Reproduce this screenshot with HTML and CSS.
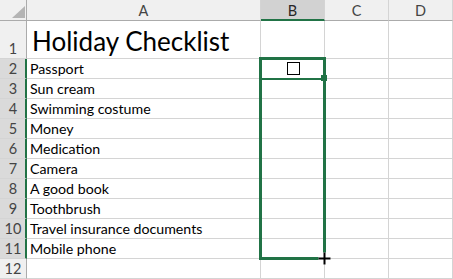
FILE: index.html
```html
<!DOCTYPE html>
<html>
<head>
<meta charset="utf-8">
<link rel="stylesheet" href="styles.css">
</head>
<body>
<div class="wrap">
  <div class="sheet">
    <div class="corner"><span class="tri"></span></div>
    <div class="ch">A</div>
    <div class="ch ch-sel">B</div>
    <div class="ch">C</div>
    <div class="ch">D</div>

    <div class="rh">1</div>
    <div class="cell title">Holiday Checklist</div>
    <div class="cell"></div><div class="cell"></div><div class="cell"></div>

    <div class="rh rh-sel">2</div>
    <div class="cell">Passport</div>
    <div class="cell center"><span class="box"></span></div><div class="cell"></div><div class="cell"></div>

    <div class="rh rh-sel">3</div>
    <div class="cell">Sun cream</div>
    <div class="cell"></div><div class="cell"></div><div class="cell"></div>

    <div class="rh rh-sel">4</div>
    <div class="cell">Swimming costume</div>
    <div class="cell"></div><div class="cell"></div><div class="cell"></div>

    <div class="rh rh-sel">5</div>
    <div class="cell">Money</div>
    <div class="cell"></div><div class="cell"></div><div class="cell"></div>

    <div class="rh rh-sel">6</div>
    <div class="cell">Medication</div>
    <div class="cell"></div><div class="cell"></div><div class="cell"></div>

    <div class="rh rh-sel">7</div>
    <div class="cell">Camera</div>
    <div class="cell"></div><div class="cell"></div><div class="cell"></div>

    <div class="rh rh-sel">8</div>
    <div class="cell">A good book</div>
    <div class="cell"></div><div class="cell"></div><div class="cell"></div>

    <div class="rh rh-sel">9</div>
    <div class="cell">Toothbrush</div>
    <div class="cell"></div><div class="cell"></div><div class="cell"></div>

    <div class="rh rh-sel">10</div>
    <div class="cell">Travel insurance documents</div>
    <div class="cell"></div><div class="cell"></div><div class="cell"></div>

    <div class="rh rh-sel">11</div>
    <div class="cell">Mobile phone</div>
    <div class="cell"></div><div class="cell"></div><div class="cell"></div>

    <div class="rh">12</div>
    <div class="cell"></div>
    <div class="cell"></div><div class="cell"></div><div class="cell"></div>
  </div>

  <div class="sel">
    <div class="active-line"></div>
  </div>
  <div class="handle"></div>
  <svg class="cursor" width="15" height="15" viewBox="0 0 15 15">
    <path d="M7.5 1.5 V13.5 M1.5 7.5 H13.5" stroke="#fff" stroke-width="5" fill="none"/>
    <path d="M7.5 1.5 V13.5 M1.5 7.5 H13.5" stroke="#000" stroke-width="2" fill="none"/>
  </svg>
</div>
</body>
</html>
```
FILE: styles.css
```css
html, body {
  margin: 0;
  padding: 0;
  background: #fff;
}
body {
  font-family: Lato, "Open Sans", sans-serif;
  font-size: 14.2px;
  color: #000;
  width: 453px;
  height: 279px;
  overflow: hidden;
}
.wrap {
  position: relative;
  width: 453px;
  height: 279px;
}
.sheet {
  display: grid;
  grid-template-columns: 27px 234px 64px 64px 64px;
  grid-template-rows: 21px 38px repeat(11, 20px);
}
.sheet > div {
  box-sizing: border-box;
  border-right: 1px solid #d4d4d4;
  border-bottom: 1px solid #d4d4d4;
}
.corner {
  background: #f0f0f0;
  border-right: 1px solid #ababab !important;
  border-bottom: 1px solid #ababab !important;
  position: relative;
}
.tri {
  position: absolute;
  right: 1px;
  bottom: 2px;
  width: 0;
  height: 0;
  border-left: 13px solid transparent;
  border-bottom: 12px solid #b4b4b4;
}
.ch {
  background: #f0f0f0;
  border-bottom: 1px solid #ababab !important;
  display: flex;
  align-items: center;
  justify-content: center;
  color: #444;
  font-size: 14.5px;
  padding-top: 1px;
}
.ch-sel {
  background: #d2d2d2;
  border-bottom: 2px solid #217346 !important;
  color: #262626;
}
.rh {
  background: #f0f0f0;
  border-right: 1px solid #ababab !important;
  display: flex;
  align-items: flex-end;
  justify-content: center;
  padding-bottom: 1px;
  color: #444;
  font-size: 14.5px;
}
.rh-sel {
  background: #dadada;
  border-right: 2px solid #217346 !important;
  padding-left: 1px;
}
.cell {
  display: flex;
  align-items: flex-end;
  padding: 0 0 0 3px;
  white-space: nowrap;
  line-height: 18px;
}
.title {
  font-size: 26px;
  line-height: 30px;
  padding-left: 5px;
  padding-bottom: 2px;
}
.center {
  justify-content: center;
  align-items: flex-start;
  padding: 3px 0 0 0;
}
.box {
  display: block;
  width: 13px;
  height: 13px;
  box-sizing: border-box;
  border: 1px solid #000;
  background: #fff;
  margin-left: 2px;
}
.sel {
  position: absolute;
  left: 259px;
  top: 57px;
  width: 67px;
  height: 203px;
  box-sizing: border-box;
  border: 3px solid #217346;
}
.active-line {
  position: absolute;
  left: 0;
  right: 0;
  top: 18px;
  height: 2px;
  background: #217346;
}
.handle {
  position: absolute;
  left: 321px;
  top: 75px;
  width: 6px;
  height: 6px;
  background: #217346;
}
.cursor {
  position: absolute;
  left: 317px;
  top: 251px;
}
```
